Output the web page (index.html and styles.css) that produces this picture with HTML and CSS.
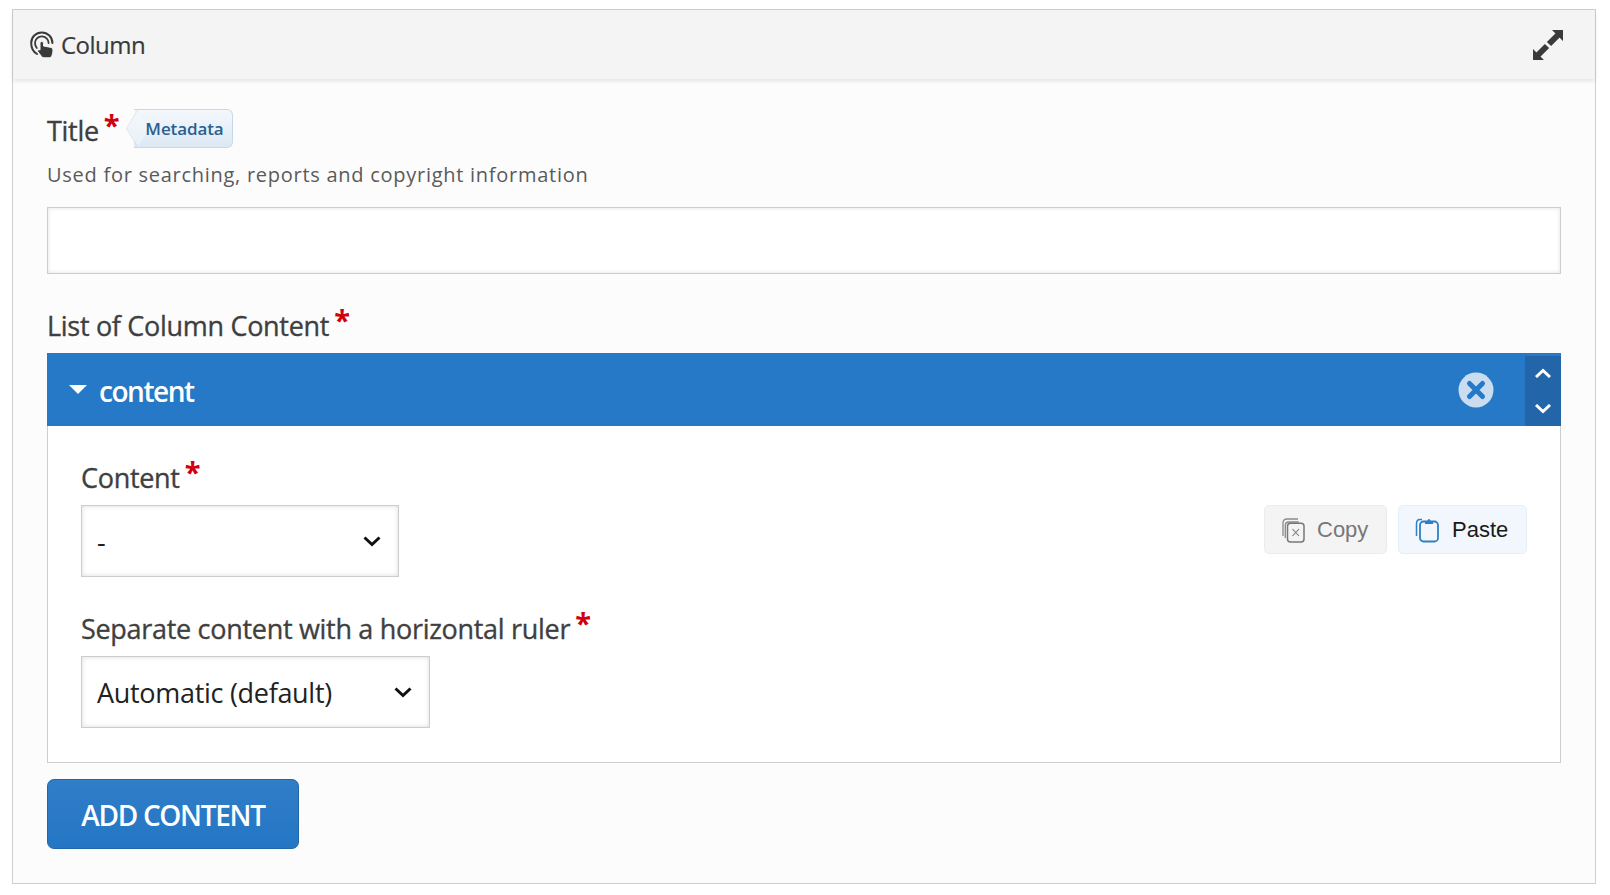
FILE: index.html
```html
<!DOCTYPE html>
<html lang="en">
<head>
<meta charset="utf-8">
<title>Column</title>
<link rel="stylesheet" href="styles.css">
</head>
<body>
<section class="panel">
  <header class="panel-head">
    <div class="panel-title">
      <svg class="lib-icon" viewBox="0 0 24 28" width="24" height="28"><path d="M7 23C3.500 21 1.200 16.500 1.200 12 1.200 6 5.800 1.400 11.800 1.400S22.400 6 22.400 12" fill="none" stroke="#3a3a3a" stroke-width="2" stroke-linecap="round"/><path d="M6.800 17C5.500 15.500 5 13.800 5 12c0-3.800 3-6.600 6.800-6.600s6.800 2.800 6.800 6.600" fill="none" stroke="#3a3a3a" stroke-width="1.800" stroke-linecap="round"/><path d="M10 12.500c0-1.200.7-2 1.700-2s1.800.8 1.800 2V15l6.500 1.200c1.800.3 3 1.300 3 2.800 0 1.500-.3 3.500-.8 5-.5 1.500-1.500 2.800-3 2.800H14c-1 0-1.700-.4-2.300-1.200L8 21c-.8-1-.2-2.300 1-2.300.4 0 .8.100 1 .3z" fill="#3a3a3a" stroke="#f4f4f4" stroke-width="1"/></svg>
      <span>Column</span>
    </div>
    <svg class="expand" viewBox="0 0 32 32" width="32" height="32"><path d="M20 1h11v11zM1 20v11h11z" fill="#3a3a3a"/><path d="M26 6l-9 9M6 26l9-9" stroke="#3a3a3a" stroke-width="6" fill="none"/></svg>
  </header>
  <div class="panel-body">
    <div class="field-title">
      <div class="label-row">
        <label class="label">Title<span class="req">*</span></label>
        <span class="tag"><span class="tag-text">Metadata</span></span>
      </div>
      <p class="hint">Used for searching, reports and copyright information</p>
      <input class="text-input" type="text">
    </div>
    <div class="label list-label">List of Column Content<span class="req">*</span></div>
    <div class="item">
      <div class="item-bar">
        <span class="caret"></span>
        <span class="item-name">content</span>
        <svg class="remove" viewBox="0 0 36 36" width="36" height="36"><circle cx="18" cy="18" r="17.500" fill="#c9dcf0"/><path d="M11.500 11.500l13 13M24.500 11.500l-13 13" stroke="#2579c6" stroke-width="5" stroke-linecap="round"/></svg>
        <div class="order">
          <svg viewBox="0 0 16 10" width="16" height="10"><path d="M1 9l7-6.500L15 9" fill="none" stroke="#fff" stroke-width="3"/></svg>
          <svg viewBox="0 0 16 10" width="16" height="10"><path d="M1 1l7 6.500L15 1" fill="none" stroke="#fff" stroke-width="3"/></svg>
        </div>
      </div>
      <div class="item-body">
        <div class="clip-buttons">
          <button class="clip copy" type="button">
            <svg viewBox="0 0 24 26" width="24" height="26"><path d="M2 19V6c0-2.500 1.500-4 4-4h11" fill="none" stroke="#8a8a8a" stroke-width="1.300"/><path d="M4.300 21V8.500c0-2 1-3.500 3.500-3.500h10" fill="none" stroke="#8a8a8a" stroke-width="1.300"/><rect x="6.500" y="6.200" width="16.500" height="18.800" rx="3" fill="#f4f4f4" stroke="#777" stroke-width="1.500"/><path d="M11.500 12l6.500 7M18 12l-6.500 7" stroke="#777" stroke-width="1.100"/></svg>
            <span>Copy</span>
          </button>
          <button class="clip paste" type="button">
            <svg viewBox="0 0 24 26" width="24" height="26"><path d="M1.500 19V6.500c0-2.500 1-4 3.500-4h2" fill="none" stroke="#2f7fc4" stroke-width="1.500"/><rect x="5" y="4.500" width="18" height="20" rx="3.500" fill="none" stroke="#2f7fc4" stroke-width="1.800"/><path d="M10 7V4.500h2.200C12.500 3 13.200 2 14 2s1.500 1 1.800 2.500H18V7z" fill="#2f7fc4"/></svg>
            <span>Paste</span>
          </button>
        </div>
        <div class="field">
          <div class="label">Content<span class="req">*</span></div>
          <div class="select select-a"><span>-</span><svg viewBox="0 0 18 11" width="18" height="11"><path d="M1.500 1.500L9 8.500l7.500-7" fill="none" stroke="#111" stroke-width="3"/></svg></div>
        </div>
        <div class="field">
          <div class="label">Separate content with a horizontal ruler<span class="req">*</span></div>
          <div class="select select-b"><span>Automatic (default)</span><svg viewBox="0 0 18 11" width="18" height="11"><path d="M1.500 1.500L9 8.500l7.500-7" fill="none" stroke="#111" stroke-width="3"/></svg></div>
        </div>
      </div>
    </div>
    <button class="add" type="button">ADD CONTENT</button>
  </div>
</section>
</body>
</html>
```
FILE: styles.css
```css
* { box-sizing: border-box; }
html, body { margin: 0; background: #fff; }
body { padding: 9px 14px 0 12px; font-family: "Open Sans", "Noto Sans", sans-serif; color: #3f3f3f; }
.panel { height: 875px; border: 1px solid #cfcfcf; background: #fcfcfc; }
.panel-head {
  height: 69px; background: #f4f4f4; display: flex; align-items: center; justify-content: space-between;
  padding: 0 31px 0 17px; box-shadow: 0 2px 4px rgba(0,0,0,.1); position: relative;
}
.panel-title { display: flex; align-items: center; gap: 7px; font-size: 24px; letter-spacing: -.5px; color: #3a3a3a; -webkit-text-stroke: .2px #3a3a3a; }
.panel-body { padding: 30px 34px 0 34px; }
.label-row { display: flex; align-items: flex-start; height: 48px; }
.label { font-size: 27px; line-height: 44px; letter-spacing: -.3px; color: #3f3f3f; -webkit-text-stroke: .35px #3f3f3f; white-space: nowrap; }
.req { color: #d0000e; font-size: 29px; line-height: 20px; margin-left: 5px; vertical-align: 5px; font-weight: 700; letter-spacing: 0; -webkit-text-stroke: 0; }
.tag {
  position: relative; margin: 0 0 0 14px; height: 39px; width: 99px; display: flex; align-items: center; justify-content: flex-end; padding-right: 8px;
  font-size: 17px; font-weight: 600; letter-spacing: -.1px; color: #2c5f8d; background: linear-gradient(#f4f8fc, #dce8f3);
  border: 1px solid #c7d9e9; border-left: 0; border-radius: 0 6px 6px 0;
}
.tag::before {
  content: ""; position: absolute; left: -10px; top: 5px; width: 26px; height: 26px; border-radius: 3px;
  background: linear-gradient(135deg, #f4f8fc, #e8f0f7);
  border: 1px solid #c7d9e9; border-top: 0; border-right: 0; transform: scaleX(.62) rotate(45deg);
}
.tag-text { position: relative; }
.hint { margin: 3px 0 0; font-size: 20px; line-height: 30px; letter-spacing: .73px; color: #5a5a5a; }
.text-input {
  display: block; width: 100%; height: 67px; margin-top: 17px; border: 1px solid #cdcdcd; background: #fff;
  box-shadow: inset 0 0 4px rgba(0,0,0,.12);
}
.list-label { margin-top: 30px; }
.item { margin-top: 5px; }
.item-bar { height: 73px; background: #2579c6; display: flex; align-items: center; padding-left: 22px; color: #fff; }
.caret { width: 0; height: 0; border: 9px solid transparent; border-top: 9px solid #fff; border-bottom: 0; }
.item-name { margin-left: 12px; padding-top: 2px; font-size: 28px; font-weight: 600; letter-spacing: -1.45px; flex: 1; }
.remove { margin-right: 31px; }
.order {
  width: 36px; height: 70px; margin-top: 3px; background: #2266a9; display: flex; flex-direction: column;
  align-items: center; justify-content: space-between; padding: 12px 0 12px;
}
.item-body { position: relative; height: 337px; background: #fff; border: 1px solid #cfcfcf; border-top: 0; padding: 30px 33px 0; }
.clip-buttons { position: absolute; top: 79px; right: 33px; display: flex; gap: 11px; }
.clip {
  height: 49px; display: flex; align-items: center; border-radius: 5px; font: 22px "Liberation Sans", Arial, sans-serif;
  padding: 0 16px; gap: 13px;
}
.clip svg { flex: none; }
.copy { width: 123px; gap: 12px; background: #f4f4f4; border: 1px solid #ececec; color: #777; }
.paste { width: 129px; background: #f1f7fc; border: 1px solid #e5eff7; color: #1a1a1a; }
.field { margin-bottom: 30px; }
.select {
  height: 72px; margin-top: 5px; border: 1px solid #cdcdcd; background: #fff; display: flex; align-items: center; justify-content: space-between;
  padding: 0 17px 0 15px; font-size: 27px; letter-spacing: -.3px; color: #222; box-shadow: inset 0 0 5px rgba(0,0,0,.14);
}
.select-a { width: 318px; }
.select-b { width: 349px; }
.add {
  display: block; width: 252px; height: 70px; margin-top: 16px; border: 1px solid #2266a9; border-radius: 7px;
  background: linear-gradient(#307dc8, #2476c4); color: #fff; font: 600 28px "Open Sans", sans-serif; letter-spacing: -1.3px; padding: 2px 0 0;
}
```
